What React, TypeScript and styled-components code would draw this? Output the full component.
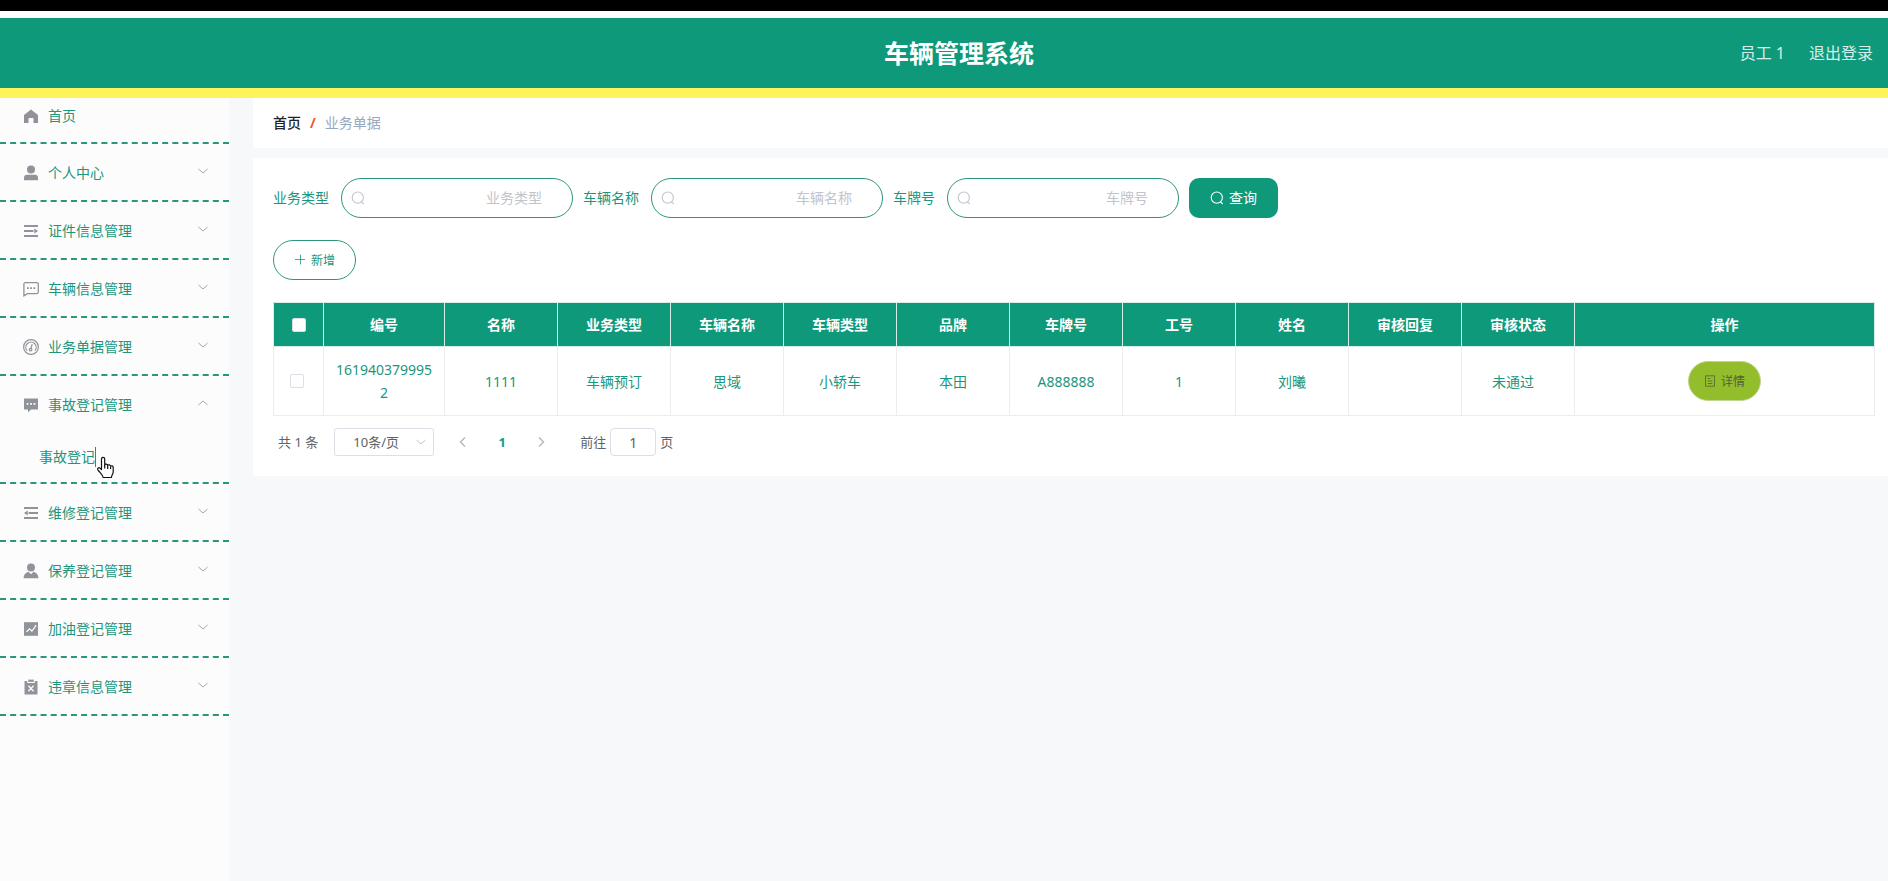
import React from 'react';
import styled, { createGlobalStyle } from 'styled-components';

const teal = '#0f997b';
const textTeal = '#1c967c';
const iconGray = '#909399';
const line = '#ebeef0';

const GlobalStyle = createGlobalStyle`
  * { box-sizing: border-box; }
  body {
    margin: 0;
    background: #f7f8fa;
    font-family: "Noto Sans", "Noto Sans CJK SC", sans-serif;
    font-size: 14px;
  }
  button, input, select { font-family: inherit; }
  button { cursor: pointer; }
`;

const Page = styled.div`
  display: flex;
  flex-direction: column;
  min-height: 100vh;
`;

const TopStrip = styled.div`
  height: 18px;
  background: #fff;
  border-top: 11px solid #000;
`;

const Header = styled.header`
  display: grid;
  grid-template-columns: 1fr auto 1fr;
  align-items: center;
  height: 80px;
  padding: 0 15px 0 45px;
  background: ${teal};
  border-bottom: 10px solid #fff35c;
`;

const Title = styled.h1`
  grid-column: 2;
  margin: 0;
  color: #fff;
  font-size: 25px;
  line-height: 36px;
  font-weight: 700;
`;

const UserArea = styled.div`
  display: flex;
  justify-content: flex-end;
  gap: 24px;
  color: #d5efe8;
  font-size: 16px;
  line-height: 24px;
`;

const LogoutButton = styled.button`
  padding: 0;
  border: 0;
  background: none;
  color: inherit;
  font-size: inherit;
  line-height: inherit;
`;

const Body = styled.div`
  display: flex;
  flex: 1;
`;

const Sidebar = styled.nav`
  flex: none;
  width: 229px;
  background: #fcfcfc;
`;

const MenuList = styled.ul`
  margin: 0;
  padding: 0;
  list-style: none;
`;

const MenuItem = styled.li`
  border-bottom: 2px dashed #2c957e;
`;

const MenuLink = styled.a<{ $short?: boolean }>`
  display: flex;
  align-items: center;
  height: ${(p) => (p.$short ? 44 : 56)}px;
  padding: ${(p) => (p.$short ? '0 20px 8px 19px' : '2px 20px 0 19px')};
  color: ${textTeal};
  text-decoration: none;
  line-height: 20px;
`;

const IconSlot = styled.span`
  display: flex;
  justify-content: center;
  width: 24px;
  margin-right: 5px;
`;

const Arrow = styled.span`
  display: flex;
  margin-left: auto;
  padding-bottom: 4px;
  color: #a3a6ab;
`;

const SubLink = styled.a`
  display: flex;
  align-items: center;
  position: relative;
  height: 50px;
  padding-left: 39px;
  color: ${textTeal};
  text-decoration: none;
  line-height: 20px;
`;

const SubText = styled.span`
  border-right: 1px solid ${teal};
`;

const Pointer = styled.svg`
  position: absolute;
  left: 96px;
  top: 24px;
`;

const Main = styled.main`
  flex: 1;
  min-width: 0;
  padding-left: 24px;
`;

const Crumbs = styled.nav`
  display: flex;
  align-items: center;
  height: 50px;
  padding: 0 20px 2px;
  margin-bottom: 10px;
  background: #fff;
  border-radius: 0 0 0 4px;
  color: #97a8be;
`;

const CrumbLink = styled.a`
  color: #1f2428;
  font-weight: 500;
  text-decoration: none;
`;

const Slash = styled.span`
  margin: 0 9px;
  color: #f0562b;
  font-weight: 700;
`;

const Card = styled.section`
  padding: 20px 13px 20px 20px;
  background: #fff;
`;

const SearchForm = styled.form`
  display: flex;
  align-items: center;
  flex-wrap: wrap;
  gap: 10px;
`;

const Field = styled.label`
  display: flex;
  align-items: center;
  gap: 12px;
  color: ${textTeal};
`;

const FieldName = styled.span`
  padding-bottom: 2px;
`;

const InputShell = styled.span`
  display: flex;
  align-items: center;
  width: 232px;
  height: 40px;
  padding: 0 30px 0 9px;
  border: 1px solid #2c957e;
  border-radius: 20px;
  color: #c0c4cc;
`;

const SearchInput = styled.input`
  flex: 1;
  min-width: 0;
  padding: 0 0 2px;
  border: 0;
  outline: 0;
  background: none;
  color: ${teal};
  font-size: 14px;
  text-align: right;
  &::placeholder { color: #c0c4cc; }
`;

const QueryButton = styled.button`
  display: flex;
  align-items: center;
  justify-content: center;
  gap: 5px;
  width: 89px;
  height: 40px;
  padding: 0;
  border: 0;
  border-radius: 10px;
  background: ${teal};
  color: #fff;
  font-size: 14px;
`;

const PillButton = styled.button<{ $tone: 'outline' | 'lime' }>`
  display: inline-flex;
  align-items: center;
  justify-content: center;
  gap: 5px;
  height: 40px;
  padding: 0 ${(p) => (p.$tone === 'lime' ? 15 : 20)}px;
  border: 1px solid ${(p) => (p.$tone === 'lime' ? '#bfd693' : '#2c957e')};
  border-radius: 20px;
  background: ${(p) => (p.$tone === 'lime' ? '#93bd2a' : '#fff')};
  color: ${(p) => (p.$tone === 'lime' ? '#50603a' : textTeal)};
  font-size: 12px;
`;

const Toolbar = styled.div`
  padding: 22px 0;
`;

const Table = styled.table`
  width: 100%;
  table-layout: fixed;
  border-collapse: collapse;
  color: ${textTeal};
  text-align: center;
  line-height: 23px;
`;

const HeadCell = styled.th<{ $w?: number }>`
  width: ${(p) => (p.$w ? `${p.$w}px` : 'auto')};
  padding: 10px;
  border: 1px solid #d3efe8;
  background: ${teal};
  color: #fff;
  font-weight: 700;
`;

const cellPadding = {
  text: '0 10px',
  tick: '0 4px 0 0',
  status: '0 20px 0 10px',
};

const Cell = styled.td<{ $kind?: keyof typeof cellPadding }>`
  height: 69px;
  padding: ${(p) => cellPadding[p.$kind ?? 'text']};
  border: 1px solid ${line};
  word-break: break-all;
`;

const Tick = styled.input`
  appearance: none;
  display: block;
  width: 14px;
  height: 14px;
  margin: 0 auto;
  border: 1px solid #dcdfe6;
  border-radius: 2px;
  background: #fff;
`;

const Pagination = styled.div`
  display: flex;
  align-items: center;
  padding: 12px 5px 0;
  color: #606266;
  font-size: 13px;
  line-height: 28px;
`;

const SizeBox = styled.span`
  display: grid;
  align-items: center;
  width: 100px;
  margin: 0 14px 0 16px;
  color: #c0c4cc;
`;

const SizeSelect = styled.select`
  grid-area: 1 / 1;
  appearance: none;
  width: 100%;
  height: 28px;
  padding: 0 24px 0 8px;
  border: 1px solid #dcdfe6;
  border-radius: 3px;
  background: #fff;
  color: #606266;
  font-size: 13px;
  text-align-last: center;
`;

const SizeArrow = styled.span`
  grid-area: 1 / 1;
  justify-self: end;
  display: flex;
  margin-right: 7px;
  pointer-events: none;
`;

const Pager = styled.div`
  display: flex;
  gap: 9px;
  margin-right: 24px;
`;

const PageButton = styled.button<{ $active?: boolean }>`
  display: flex;
  align-items: center;
  justify-content: center;
  width: 30px;
  height: 28px;
  padding: 0;
  border: 0;
  background: none;
  color: ${(p) => (p.$active ? '#14a085' : '#b4bac4')};
  font-size: 13px;
  font-weight: 700;
`;

const Jump = styled.label`
  display: flex;
  align-items: center;
  gap: 4px;
`;

const JumpInput = styled.input`
  width: 46px;
  height: 28px;
  padding: 0 3px;
  border: 1px solid #dcdfe6;
  border-radius: 4px;
  color: #606266;
  font-size: 14px;
  text-align: center;
`;

const chevrons = {
  up: 'M1.500 8 6 4l4.500 4',
  down: 'M1.500 4 6 8l4.500-4',
  left: 'M8 1.500 3.500 6 8 10.500',
  right: 'M4 1.500 8.500 6 4 10.500',
};

const Chevron = ({ dir, weight = 1 }: { dir: keyof typeof chevrons; weight?: number }) => (
  <svg width="12" height="12" viewBox="0 0 12 12" fill="none" stroke="currentColor" strokeWidth={weight} aria-hidden="true">
    <path d={chevrons[dir]} />
  </svg>
);

const SearchIcon = () => (
  <svg width="14" height="14" viewBox="0 0 14 14" fill="none" stroke="currentColor" strokeWidth="1.1" aria-hidden="true">
    <circle cx="6.800" cy="6.600" r="5.600" />
    <path d="M10.400 10.800l2.400 2.200" />
  </svg>
);

const PlusIcon = () => (
  <svg width="12" height="12" viewBox="0 0 12 12" fill="none" stroke="currentColor" strokeWidth="0.800" aria-hidden="true">
    <path d="M1 5.500h10M6.500 0.500v10" />
  </svg>
);

const DocIcon = () => (
  <svg width="12" height="12" viewBox="0 0 12 12" fill="none" stroke="currentColor" strokeWidth="0.800" aria-hidden="true">
    <path d="M1.500 0.800h9v10.400h-9zM3.700 3.500h2.600M3.700 6h4.600M3.700 8.500h4.600" />
  </svg>
);

const shapes: Record<string, React.ReactNode> = {
  home: <path d="M8 1.500 15 7v8h-4.500v-4a1 1 0 0 0-1-1h-3a1 1 0 0 0-1 1v4H1V7z" />,
  user: (
    <>
      <circle cx="8" cy="4.500" r="4" />
      <path d="M1 15.200v-2.200a3.200 3.200 0 0 1 3.200-3.200h7.600A3.200 3.200 0 0 1 15 13v2.200z" />
    </>
  ),
  unfold: <path d="M1 2h14v2H1zM1 7h9.500v2H1zM11.300 5.400 15 8l-3.700 2.600zM1 12h14v2H1z" />,
  fold: <path d="M1 2h14v2H1zM5.500 7H15v2H5.500zM4.700 5.400 1 8l3.700 2.600zM1 12h14v2H1z" />,
  chat: (
    <>
      <path d="M2.200 1.600h11.600a1.500 1.500 0 0 1 1.500 1.500v8a1.500 1.500 0 0 1-1.500 1.500H4.400L.9 14.800V3.100a1.400 1.400 0 0 1 1.300-1.500z" fill="none" stroke="currentColor" strokeWidth="1.300" />
      <path d="M4 6.200h1.800V8H4zM7.200 6.200H9V8H7.200zM10.400 6.200h1.800V8h-1.800z" />
    </>
  ),
  gauge: (
    <g fill="none" stroke="currentColor" strokeWidth="1.200">
      <circle cx="8" cy="8" r="7.400" />
      <path d="M4 11.600a5.200 5.200 0 1 1 8 0" />
      <circle cx="7.600" cy="10.600" r="1.300" />
      <path d="M8 9.300 9.200 5" />
    </g>
  ),
  comment: (
    <path fillRule="evenodd" d="M1 1.600h14v10.800H8.200L5 15.200v-2.800H1zM3.600 6v1.800h1.800V6zM7.100 6v1.800h1.800V6zM10.600 6v1.800h1.800V6z" />
  ),
  custom: (
    <>
      <circle cx="8" cy="4.400" r="4" />
      <path d="M.6 15.300c0-3.400 1.800-5.700 4.800-6.600L8 11.300l2.600-2.600c3 .9 4.800 3.200 4.800 6.600z" />
    </>
  ),
  marketing: (
    <>
      <path d="M1 1.200h14v13.600H1z" />
      <path d="M3.500 11l3-3.200 2.400 2.200 3.200-4.200" fill="none" stroke="#fcfcfc" strokeWidth="1.200" />
      <circle cx="12.500" cy="5" r="0.900" fill="#fcfcfc" />
    </>
  ),
  release: (
    <>
      <path d="M1.500 2h2.700v1.900h7.600V2h2.700v13.500h-13z" />
      <path d="M5.300.6h5.400v2.300H5.300z" />
      <path d="M5.400 6.700l5.200 5.600M10.600 6.700 5.400 12.300" fill="none" stroke="#fcfcfc" strokeWidth="1.300" />
    </>
  ),
};

const MenuIcon = ({ name }: { name: string }) => (
  <svg width="16" height="16" viewBox="0 0 16 16" fill="currentColor" color={iconGray} aria-hidden="true">
    {shapes[name]}
  </svg>
);

const HandPointer = () => (
  <Pointer width="19" height="24" viewBox="0 0 19 24" fill="#fff" stroke="#111" strokeWidth="1.200" strokeLinejoin="round" aria-hidden="true">
    <path d="M5.500 13.500V3a1.600 1.600 0 0 1 3.200 0v6c.2-1.200 2.800-1.200 3 .4.400-1 2.700-.8 2.900.8.600-.8 2.600-.5 2.600 1.200v4.600c0 2-1.600 3-1.800 5.500H7.200c-.4-2.500-3.200-4.800-5.300-7.700-1-1.500.9-2.900 2.200-1.600z" />
    <path d="M8.700 9v3.500M11.700 9.500V13M14.600 10.500V13" fill="none" />
  </Pointer>
);

const menu = [
  { icon: 'user', text: '个人中心' },
  { icon: 'unfold', text: '证件信息管理' },
  { icon: 'chat', text: '车辆信息管理' },
  { icon: 'gauge', text: '业务单据管理' },
  { icon: 'comment', text: '事故登记管理', child: '事故登记' },
  { icon: 'fold', text: '维修登记管理' },
  { icon: 'custom', text: '保养登记管理' },
  { icon: 'marketing', text: '加油登记管理' },
  { icon: 'release', text: '违章信息管理' },
];

const columns = ['名称', '业务类型', '车辆名称', '车辆类型', '品牌', '车牌号', '工号', '姓名', '审核回复', '审核状态'];
const record = ['1111', '车辆预订', '思域', '小轿车', '本田', 'A888888', '1', '刘曦', '', '未通过'];

export default function App() {
  return (
    <Page>
      <GlobalStyle />
      <TopStrip />
      <Header>
        <Title>车辆管理系统</Title>
        <UserArea>
          <span>员工 1</span>
          <LogoutButton type="button">退出登录</LogoutButton>
        </UserArea>
      </Header>
      <Body>
        <Sidebar>
          <MenuList>
            <MenuItem>
              <MenuLink href="#home" $short>
                <IconSlot><MenuIcon name="home" /></IconSlot>
                首页
              </MenuLink>
            </MenuItem>
            {menu.map((m) => (
              <MenuItem key={m.text}>
                <MenuLink href="#menu">
                  <IconSlot><MenuIcon name={m.icon} /></IconSlot>
                  {m.text}
                  <Arrow>
                    <Chevron dir={m.child ? 'up' : 'down'} />
                  </Arrow>
                </MenuLink>
                {m.child && (
                  <SubLink href="#accident">
                    <SubText>{m.child}</SubText>
                    <HandPointer />
                  </SubLink>
                )}
              </MenuItem>
            ))}
          </MenuList>
        </Sidebar>
        <Main>
          <Crumbs>
            <CrumbLink href="#home">首页</CrumbLink>
            <Slash>/</Slash>
            <span>业务单据</span>
          </Crumbs>
          <Card>
            <SearchForm>
              {['业务类型', '车辆名称', '车牌号'].map((name) => (
                <Field key={name}>
                  <FieldName>{name}</FieldName>
                  <InputShell>
                    <SearchIcon />
                    <SearchInput type="text" placeholder={name} />
                  </InputShell>
                </Field>
              ))}
              <QueryButton type="button">
                <SearchIcon />
                <FieldName>查询</FieldName>
              </QueryButton>
            </SearchForm>
            <Toolbar>
              <PillButton type="button" $tone="outline">
                <PlusIcon />
                新增
              </PillButton>
            </Toolbar>
            <Table>
              <thead>
                <tr>
                  <HeadCell $w={50}><Tick type="checkbox" aria-label="全选" /></HeadCell>
                  <HeadCell $w={121}>编号</HeadCell>
                  {columns.map((c) => <HeadCell key={c}>{c}</HeadCell>)}
                  <HeadCell $w={300}>操作</HeadCell>
                </tr>
              </thead>
              <tbody>
                <tr>
                  <Cell $kind="tick"><Tick type="checkbox" aria-label="选择" /></Cell>
                  <Cell>1619403799952</Cell>
                  {record.map((v, i) => (
                    <Cell key={columns[i]} $kind={columns[i] === '审核状态' ? 'status' : 'text'}>{v}</Cell>
                  ))}
                  <Cell>
                    <PillButton type="button" $tone="lime">
                      <DocIcon />
                      详情
                    </PillButton>
                  </Cell>
                </tr>
              </tbody>
            </Table>
            <Pagination>
              <span>共 1 条</span>
              <SizeBox>
                <SizeSelect aria-label="每页条数" defaultValue="10">
                  <option value="10">10条/页</option>
                </SizeSelect>
                <SizeArrow><Chevron dir="down" /></SizeArrow>
              </SizeBox>
              <Pager>
                <PageButton type="button" aria-label="上一页"><Chevron dir="left" weight={1.5} /></PageButton>
                <PageButton type="button" $active>1</PageButton>
                <PageButton type="button" aria-label="下一页"><Chevron dir="right" weight={1.5} /></PageButton>
              </Pager>
              <Jump>
                前往
                <JumpInput type="text" defaultValue="1" />
                页
              </Jump>
            </Pagination>
          </Card>
        </Main>
      </Body>
    </Page>
  );
}
